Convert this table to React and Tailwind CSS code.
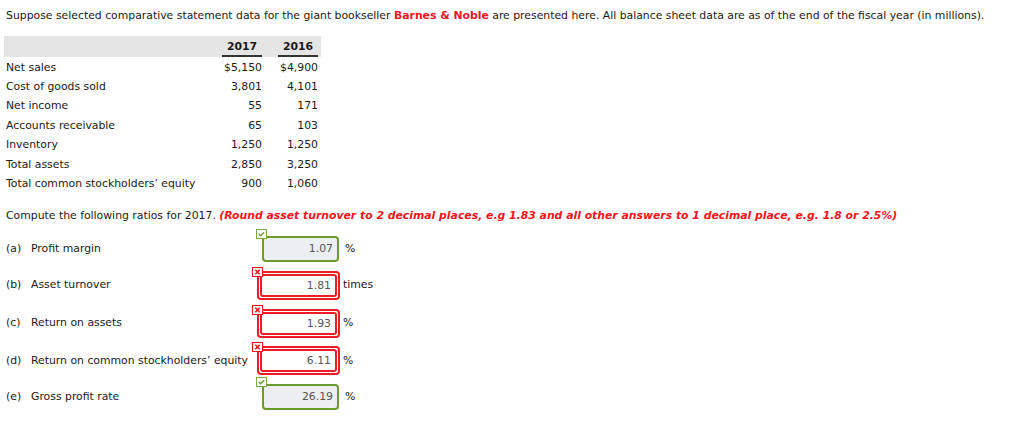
const rows = [
  ["Net sales", "$5,150", "$4,900"],
  ["Cost of goods sold", "3,801", "4,101"],
  ["Net income", "55", "171"],
  ["Accounts receivable", "65", "103"],
  ["Inventory", "1,250", "1,250"],
  ["Total assets", "2,850", "3,250"],
  ["Total common stockholders\u2019 equity", "900", "1,060"],
];

const answers = [
  { tag: "(a)", label: "Profit margin", value: "1.07", unit: "%", ok: true, row: "h-[36px]" },
  { tag: "(b)", label: "Asset turnover", value: "1.81", unit: "times", ok: false, row: "h-[37px]" },
  { tag: "(c)", label: "Return on assets", value: "1.93", unit: "%", ok: false, row: "h-[39px]" },
  { tag: "(d)", label: "Return on common stockholders\u2019 equity", value: "6.11", unit: "%", ok: false, row: "h-[36px]" },
  { tag: "(e)", label: "Gross profit rate", value: "26.19", unit: "%", ok: true, row: "h-[37px]" },
];

const CheckBadge = () => (
  <svg width="11" height="10" viewBox="0 0 11 10" className="absolute -left-[6px] -top-[7px]">
    <rect x="0.5" y="0.5" width="10" height="9" fill="#fff" stroke="#7aa84a" />
    <path d="M2.8 5 L4.6 6.8 L8.2 3.2" fill="none" stroke="#6a9a3a" strokeWidth="1.4" />
  </svg>
);

const CrossBadge = () => (
  <svg width="11" height="10" viewBox="0 0 11 10" className="absolute -left-[5px] -top-[4px]">
    <rect x="0.5" y="0.5" width="10" height="9" fill="#fff" stroke="#e8141b" />
    <path d="M3.3 2.8 L7.7 7.2 M7.7 2.8 L3.3 7.2" fill="none" stroke="#e8141b" strokeWidth="1.6" />
  </svg>
);

const AnswerBox = ({ value, ok }) => {
  if (ok) {
    return (
      <div className="relative ml-[5px] w-[77px]">
        <CheckBadge />
        <div className="h-[26px] rounded-[4px] border-2 border-[#6b9a2e] bg-[#eceef1] pr-[4px] text-right leading-[22px] text-[#555]">
          {value}
        </div>
      </div>
    );
  }
  return (
    <div className="relative w-[83px]">
      <CrossBadge />
      <div className="rounded-[4px] border-2 border-[#ee1c25] p-[1px]">
        <div className="h-[23px] rounded-[3px] border-2 border-[#ee1c25] bg-white pr-[4px] text-right leading-[19px] text-[#555]">
          {value}
        </div>
      </div>
    </div>
  );
};

const App = () => {
  return (
    <div className="h-[421px] w-[1024px] bg-white px-[6px] text-[10.85px] leading-[14px] text-[#1a1a1a]" style={{ fontFamily: "Verdana, 'DejaVu Sans', sans-serif" }}>
      <p className="pt-[9px]">
        Suppose selected comparative statement data for the giant bookseller{" "}
        <span className="font-bold text-[#f4141b]">Barnes &amp; Noble</span> are presented here. All balance sheet data are as of the end of the fiscal year (in millions).
      </p>

      <table className="ml-[-2px] mt-[13px] border-collapse">
        <thead>
          <tr className="h-[21px] bg-[#e5e5e5]">
            <th className="w-[218px]"></th>
            <th className="w-[40px] px-0 align-top">
              <div className="mt-[4px] border-b-2 border-[#333] pb-[1px] text-center font-bold">2017</div>
            </th>
            <th className="w-[59px] pl-[16px] pr-[3px] align-top">
              <div className="mt-[4px] border-b-2 border-[#333] pb-[1px] text-center font-bold">2016</div>
            </th>
          </tr>
        </thead>
        <tbody>
          <tr className="h-[1px]"><td colSpan={3}></td></tr>
          {rows.map(([label, a, b]) => (
            <tr key={label} className="h-[19.4px]">
              <td className="pl-[2px]">{label}</td>
              <td className="text-right">{a}</td>
              <td className="pr-[3px] text-right">{b}</td>
            </tr>
          ))}
        </tbody>
      </table>

      <p className="mt-[15px]">
        Compute the following ratios for 2017.{" "}
        <span className="font-bold italic text-[#f4141b]">
          (Round asset turnover to 2 decimal places, e.g 1.83 and all other answers to 1 decimal place, e.g. 1.8 or 2.5%)
        </span>
      </p>

      <div className="mt-[8px] flex flex-col">
        {answers.map((q) => (
          <div key={q.tag} className={`flex items-center ${q.row}`}>
            <div className="flex w-[251px]">
              <span className="w-[25px]">{q.tag}</span>
              <span>{q.label}</span>
            </div>
            <div className="w-[83px]">
              <AnswerBox value={q.value} ok={q.ok} />
            </div>
            <span className={q.ok ? "ml-[5px]" : "ml-[3px]"}>{q.unit}</span>
          </div>
        ))}
      </div>
    </div>
  );
};

export default App;
